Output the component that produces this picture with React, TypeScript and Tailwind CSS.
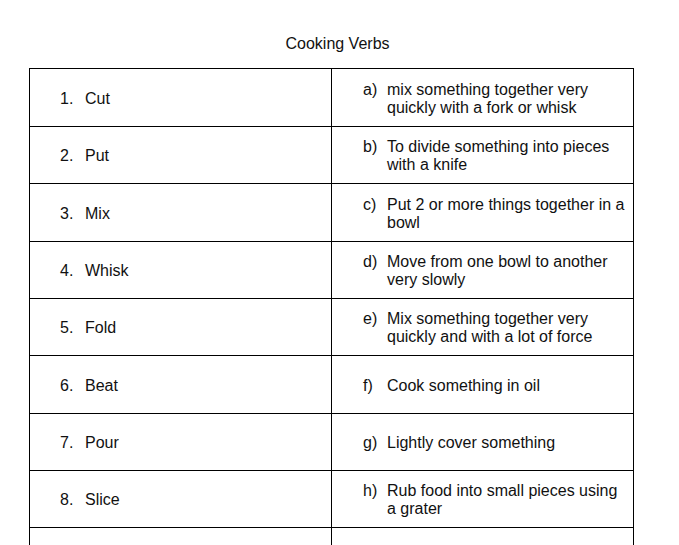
import React from "react";

const rows: { n: string; verb: string; l: string; def: string[]; h: string }[] = [
  { n: "1.", verb: "Cut", l: "a)", def: ["mix something together very", "quickly with a fork or whisk"], h: "h-[58px]" },
  { n: "2.", verb: "Put", l: "b)", def: ["To divide something into pieces", "with a knife"], h: "h-[57px]" },
  { n: "3.", verb: "Mix", l: "c)", def: ["Put 2 or more things together in a", "bowl"], h: "h-[58px]" },
  { n: "4.", verb: "Whisk", l: "d)", def: ["Move from one bowl to another", "very slowly"], h: "h-[57px]" },
  { n: "5.", verb: "Fold", l: "e)", def: ["Mix something together very", "quickly and with a lot of force"], h: "h-[57px]" },
  { n: "6.", verb: "Beat", l: "f)", def: ["Cook something in oil"], h: "h-[58px]" },
  { n: "7.", verb: "Pour", l: "g)", def: ["Lightly cover something"], h: "h-[57px]" },
  { n: "8.", verb: "Slice", l: "h)", def: ["Rub food into small pieces using", "a grater"], h: "h-[57px]" },
  { n: "", verb: "", l: "", def: [], h: "h-[57px]" },
];

export default function App() {
  return (
    <div className="w-[679px] h-[545px] overflow-hidden bg-white text-[#111] text-[16px] leading-[18px]" style={{ fontFamily: '"Liberation Sans", Arial, sans-serif' }}>
      <div className="h-[68px] pt-[35px] w-[675px] text-center">Cooking Verbs</div>
      <div className="ml-[29px] w-[605px] border-t border-l border-black">
        {rows.map((r, i) => (
          <div key={i} className={`flex border-b border-black ${r.h}`}>
            <div className="w-[302px] border-r border-black flex items-center pl-[30px] pt-[2px]">
              <span className="w-[25px]">{r.n}</span>
              <span>{r.verb}</span>
            </div>
            <div className="w-[302px] border-r border-black flex items-center pl-[31px] pt-[2px]">
              <div className="flex items-start">
                <span className="w-[24px] shrink-0">{r.l}</span>
                <div className="flex flex-col">
                  {r.def.map((d, j) => (
                    <span key={j} className="whitespace-nowrap">{d}</span>
                  ))}
                </div>
              </div>
            </div>
          </div>
        ))}
      </div>
    </div>
  );
}
